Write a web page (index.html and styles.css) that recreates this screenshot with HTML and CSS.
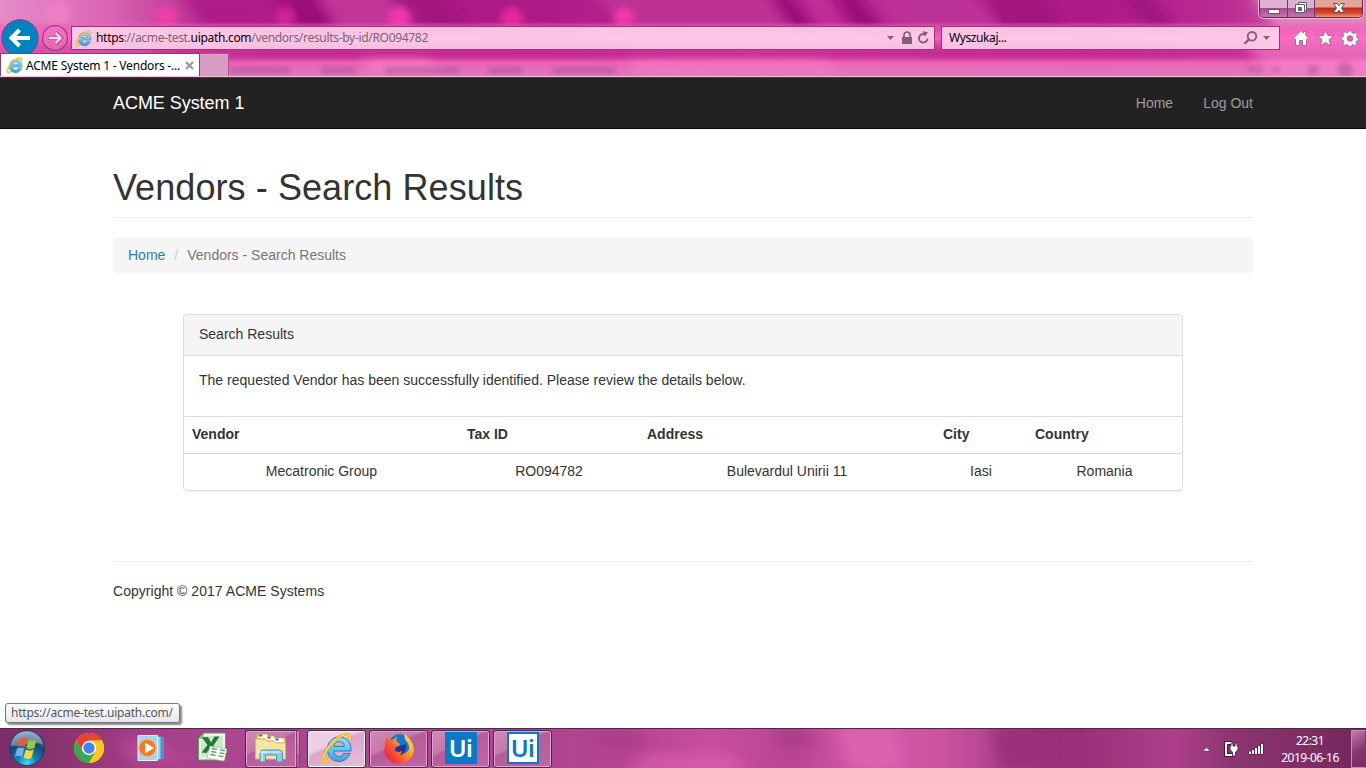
FILE: index.html
```html
<!DOCTYPE html>
<html lang="en">
<head>
<meta charset="utf-8">
<title>ACME System 1 - Vendors - Search Results</title>
<link rel="stylesheet" href="styles.css">
</head>
<body>
<svg class="defs" width="0" height="0" aria-hidden="true">
  <defs>
    <linearGradient id="ieBlue" x1="0" y1="0" x2="0" y2="1"><stop offset="0" stop-color="#8fe0fb"/><stop offset=".5" stop-color="#62c9f2"/><stop offset="1" stop-color="#3f9fdc"/></linearGradient>
    <symbol id="ie" viewBox="0 0 32 32">
      <path d="M29 21.500C27 26.500 23 29.500 18 29.500C11 29.500 6.500 24.500 6.500 17.300C6.500 10 11.500 5 18 5C25.500 5 30.500 10.500 30 19H12.800C13 22.300 15 24.500 18.200 24.500C20.200 24.500 21.800 23.500 22.600 21.500Z M12.800 14.400H23.400C23.200 11.300 21.200 9.700 18.200 9.700C15.200 9.700 13.200 11.400 12.800 14.400Z" fill="url(#ieBlue)" fill-rule="evenodd" stroke="#2273b5" stroke-width=".9"/>
      <path d="M9 27C5 31 1.800 30.500 2.500 26C3.800 18.500 11.500 9 20 4C26 1 30.500 1.800 28.700 8" fill="none" stroke="#d89c10" stroke-width="2.800"/>
      <path d="M9 27C5 31 1.800 30.500 2.500 26C3.800 18.500 11.500 9 20 4C26 1 30.500 1.800 28.700 8" fill="none" stroke="#ffd83a" stroke-width="1.900"/>
    </symbol>
  </defs>
</svg>

<header class="browser">
  <svg class="glass" viewBox="0 0 1366 78" preserveAspectRatio="none" aria-hidden="true">
    <defs>
      <filter id="b5" x="-20%" y="-50%" width="140%" height="200%"><feGaussianBlur stdDeviation="6"/></filter>
      <filter id="b3" x="-50%" y="-50%" width="200%" height="200%"><feGaussianBlur stdDeviation="3.500"/></filter>
      <filter id="b2" x="-10%" y="-50%" width="120%" height="200%"><feGaussianBlur stdDeviation="2.500"/></filter>
      <linearGradient id="gTop" x1="0" x2="1" y1="0" y2="0"><stop offset="0" stop-color="#e58cc9"/><stop offset=".08" stop-color="#d965b3"/><stop offset=".13" stop-color="#c23e9b"/><stop offset=".2" stop-color="#ac1b86"/><stop offset=".4" stop-color="#ad1a85"/><stop offset=".55" stop-color="#c23399"/><stop offset=".8" stop-color="#ad1986"/><stop offset=".9" stop-color="#bb2d93"/><stop offset="1" stop-color="#e07ab9"/></linearGradient>
      <linearGradient id="gBar" x1="0" x2="0" y1="22" y2="78" gradientUnits="userSpaceOnUse"><stop offset="0" stop-color="#ff62c0" stop-opacity="0"/><stop offset=".07" stop-color="#f957b8" stop-opacity=".55"/><stop offset=".3" stop-color="#ff5fc0" stop-opacity=".9"/><stop offset=".5" stop-color="#d4389f" stop-opacity=".75"/><stop offset=".58" stop-color="#c62d90" stop-opacity=".75"/><stop offset=".66" stop-color="#d440a0" stop-opacity=".85"/><stop offset=".73" stop-color="#ee63b6" stop-opacity=".95"/><stop offset="1" stop-color="#df82c0" stop-opacity=".96"/></linearGradient>
    </defs>
    <rect width="1366" height="78" fill="url(#gTop)"/>
    <g filter="url(#b5)">
      <path d="M180-10H250L280 34H205Z" fill="#ae1a8b"/>
      <path d="M280-10H310L345 36H300Z" fill="#9b1078"/>
      <path d="M315-10H385L420 34H340Z" fill="#c13499"/>
      <path d="M400-10H440L475 34H425Z" fill="#a2137e"/>
      <path d="M590-10H770L810 34H635Z" fill="#be3096"/>
      <path d="M765-10H790L820 34H793Z" fill="#9c1078"/>
      <path d="M830-10H855L890 34H855Z" fill="#9c1078"/>
      <path d="M872-10H970L1005 34H905Z" fill="#bd3096"/>
      <path d="M985-10H1040L1070 34H1000Z" fill="#a3127e"/>
      <path d="M1120-10H1145L1180 34H1150Z" fill="#a0147e"/>
      <path d="M1250-10H1380V36H1280Z" fill="#df83bd"/>
    </g>
    <g filter="url(#b3)">
      <circle cx="58" cy="14" r="13" fill="#f47fc5" opacity=".8"/><circle cx="166" cy="17" r="11" fill="#ee3fa8" opacity=".9"/><circle cx="285" cy="17" r="10" fill="#d6269b" opacity=".8"/><circle cx="399" cy="18" r="11" fill="#ee38aa"/><circle cx="512" cy="18" r="11" fill="#e5289b"/><circle cx="624" cy="17" r="10" fill="#f139aa"/>
    </g>
    <rect y="22" width="1366" height="56" fill="url(#gBar)"/>
    <g filter="url(#b5)" fill="#ff8ed0" opacity=".5"><path d="M-10 55H150L170 74H-10ZM360 60H425L445 74H375ZM625 62H820L845 72H640ZM1240 38H1376V76H1270Z"/></g>
    <g filter="url(#b2)" fill="#8e4482" opacity=".4"><path d="M230 68h60v7h-60zM321 68h35v7h-35zM385 68h74v7h-74zM488 68h34v7h-34zM552 68h64v7h-64zM1247 68h15v5h-15zM1272 68h8v5h-8zM1308 66h10v10h-10z"/><circle cx="1345" cy="71" r="8"/></g>
  </svg>

  <div class="titlebar">
    <div class="winctl">
      <span class="wbtn min"><svg width="14" height="8" viewBox="0 0 14 8"><rect x="1.500" y="2.500" width="11" height="4" fill="#fff" stroke="#566070"/></svg></span>
      <span class="wbtn max"><svg width="14" height="14" viewBox="0 0 14 14"><path d="M4.500 1.500H12.500V9.500H10.500V11.500H1.500V3.500H4.500Z" fill="#fff" stroke="#566070"/><path d="M4 3.500H10.500V9" fill="none" stroke="#566070"/><path d="M4.500 6.500H7.500V9.500H4.500Z" fill="#a35289" stroke="#566070"/></svg></span>
      <span class="wbtn close"><svg width="14" height="12" viewBox="0 0 14 12"><path d="M1.500 1.500H5L7 3.700L9 1.500H12.500L9.500 6L12.500 10.500H9L7 8.300L5 10.500H1.500L4.500 6Z" fill="#fff" stroke="#59505f"/></svg></span>
    </div>
  </div>

  <div class="addressrow">
    <div class="navbtns">
      <svg width="70" height="38" viewBox="0 0 70 38"><circle cx="20" cy="19" r="18.300" fill="#0083c3" stroke="#8c3b80" stroke-width="1"/><path d="M30 19H12M19.500 11L11.500 19L19.500 27" fill="none" stroke="#fff" stroke-width="4"/><circle cx="55" cy="19" r="12.400" fill="#ee78bd" fill-opacity=".55" stroke="#97407f" stroke-width="1.200"/><path d="M48 19H60M55.500 13.500L61 19L55.500 24.500" fill="none" stroke="#9b4a86" stroke-width="4"/><path d="M48.500 19H60M55.500 13.800L60.700 19L55.500 24.200" fill="none" stroke="#f6d5ea" stroke-width="2.400"/></svg>
    </div>
    <div class="field url">
      <svg class="ico" width="17" height="17"><use href="#ie"/></svg>
      <span class="urltext"><b>https</b>://acme-test.<b>uipath.com</b>/vendors/results-by-id/RO094782</span>
      <svg width="44" height="16" viewBox="0 0 44 16" fill="#806078"><path d="M1 6H8L4.500 10Z"/><path d="M16 7H26V14H16Z"/><path d="M18 8V5A3 3 0 0 1 24 5V8" fill="none" stroke="#806078" stroke-width="1.700"/><path d="M41.500 8.500A4.300 4.300 0 1 1 38.500 4.200" fill="none" stroke="#806078" stroke-width="1.900"/><path d="M37 1L42 2.500L38.500 7Z"/></svg>
    </div>
    <div class="field search"><span>Wyszukaj...</span>
      <svg width="28" height="16" viewBox="0 0 28 16"><circle cx="9" cy="6.300" r="4.300" fill="none" stroke="#806078" stroke-width="1.900"/><path d="M5.800 9.500L1.500 13.800" stroke="#806078" stroke-width="2.300"/><path d="M20 6H27L23.500 10Z" fill="#806078"/></svg>
    </div>
    <div class="tools">
      <svg width="66" height="18" viewBox="0 0 66 18" fill="#fff" stroke="#a0528b" stroke-width=".8"><path d="M.5 9L8 1.500L10.500 4V2.500H12.800V6.300L15.500 9L14 10.600L13.500 10.200V16.500H9.500V11.500H6.500V16.500H2.500V10.200L2 10.600Z"/><path d="M32.500 .8L34.700 6.400L40.700 6.800L36 10.600L37.800 16.800L32.500 13.500L27.200 16.800L29 10.600L24.300 6.800L30.300 6.400Z"/><path d="M55.300 1.800H58.700L59.100 3.800L60.600 4.500L62.300 3.400L64.600 5.700L63.500 7.400L64 8.800L65.700 9.200V11.500L63.700 12L63 13.300L64 15L61.800 16.800L60.100 15.500L58.700 16.100V17.500H55.300L55 16.100L53.500 15.500L51.800 16.600L49.600 14.400L50.700 12.700L50.100 11.200L48.200 10.800V8L50.200 7.600L50.800 6.200L49.700 4.600L52 2.600L53.600 3.800L55 3.300Z"/><circle cx="57" cy="9.500" r="2.800" fill="#df64ae"/></svg>
    </div>
  </div>

  <div class="tabs">
    <div class="tab"><svg class="ico" width="17" height="17"><use href="#ie"/></svg><span class="tabtext">ACME System 1 - Vendors -...</span><svg width="9" height="9" viewBox="0 0 9 9"><path d="M1 1L8 8M8 1L1 8" stroke="#9a9a9a" stroke-width="2.200"/></svg></div>
    <div class="newtab"></div>
  </div>
</header>

<main class="page">
  <nav class="navbar">
    <div class="container navinner"><a class="brand">ACME System 1</a><div class="navlinks"><a>Home</a><a>Log Out</a></div></div>
  </nav>
  <div class="container">
    <h1 class="pagetitle">Vendors - Search Results</h1>
    <div class="breadcrumb"><a class="crumblink">Home</a><span class="slash">/</span><span>Vendors - Search Results</span></div>
    <section class="panel">
      <div class="panelhead">Search Results</div>
      <div class="panelbody">The requested Vendor has been successfully identified. Please review the details below.</div>
      <table class="results">
        <colgroup><col class="c1"><col class="c2"><col class="c3"><col class="c4"><col class="c5"></colgroup>
        <tr><th>Vendor</th><th>Tax ID</th><th>Address</th><th>City</th><th>Country</th></tr>
        <tr><td>Mecatronic Group</td><td>RO094782</td><td>Bulevardul Unirii 11</td><td>Iasi</td><td>Romania</td></tr>
      </table>
    </section>
    <footer class="footer">Copyright © 2017 ACME Systems</footer>
  </div>
  <div class="status">https://acme-test.uipath.com/</div>
</main>

<div class="taskbar">
  <svg class="glass" viewBox="0 0 1366 40" preserveAspectRatio="none" aria-hidden="true">
    <defs>
      <linearGradient id="gTask" x1="0" x2="1" y1="0" y2="0"><stop offset="0" stop-color="#7c2d69"/><stop offset=".04" stop-color="#89336f"/><stop offset=".1" stop-color="#a33c85"/><stop offset=".17" stop-color="#ac458f"/><stop offset=".4" stop-color="#ae4690"/><stop offset=".46" stop-color="#b64491"/><stop offset=".52" stop-color="#c84e9f"/><stop offset=".58" stop-color="#b94594"/><stop offset=".64" stop-color="#d85bab"/><stop offset=".69" stop-color="#cb529f"/><stop offset=".73" stop-color="#b24490"/><stop offset=".79" stop-color="#993078"/><stop offset=".86" stop-color="#ad3f8a"/><stop offset=".9" stop-color="#8d3571"/><stop offset="1" stop-color="#74265b"/></linearGradient>
      <filter id="b6" x="-20%" y="-50%" width="140%" height="200%"><feGaussianBlur stdDeviation="7"/></filter>
    </defs>
    <rect width="1366" height="40" fill="url(#gTask)"/>
    <g filter="url(#b6)" opacity=".85"><path d="M620 44L650 28H730L750 44Z" fill="#dd60af"/><path d="M590 4H640L650 18H600Z" fill="#a73b88"/><path d="M770 0H805L820 18H780Z" fill="#a73b86"/><path d="M835-5H890L905 40H850Z" fill="#de64b0"/><path d="M990-5H1070V45H1000Z" fill="#982d77"/><path d="M120 12H160L190 34H130Z" fill="#b94c98"/></g>
  </svg>
  <div class="start"><svg width="38" height="38" viewBox="0 0 38 38"><defs><radialGradient id="orb" cx=".5" cy=".95" r=".95"><stop offset="0" stop-color="#35e5ff"/><stop offset=".3" stop-color="#1680b7"/><stop offset=".65" stop-color="#154573"/><stop offset="1" stop-color="#7c9ab5"/></radialGradient></defs><circle cx="19" cy="19" r="17.500" fill="url(#orb)" stroke="#203958"/><path d="M3 16C6-2 31-2 35 16C25 10 12 20 3 16" fill="#fff" opacity=".3"/><path d="M12 10C15 7.500 17.500 8.500 19 9.500L16.800 18C14 16.500 12 17 9.500 18Z" fill="#f25a2c"/><path d="M20.500 10.500C23 12 26 12 28.500 10.500L26.300 19C24 20.500 21 20.500 18.300 19Z" fill="#97c83d"/><path d="M9 19.500C12 18 14 18.200 16.300 19.500L14 28C12 26.300 9.500 26.500 6.800 28Z" fill="#6cb5ed"/><path d="M17.800 20.500C20.500 22 23.300 22 25.800 20.500L23.500 29C21 30.500 18.500 30.200 15.500 28.500Z" fill="#ffd33c"/></svg></div>
  <div class="app"><svg width="30" height="30" viewBox="0 0 30 30"><circle cx="15" cy="15" r="15" fill="#fbc116"/><path d="M15 7.500H28A15 15 0 0 0 2 7.500L8.500 18.700Z" fill="#e94335"/><path d="M2 7.500A15 15 0 0 0 15 30L21.500 18.700L15 22L8.500 18.700Z" fill="#35a853"/><path d="M15 7.500H28A15 15 0 0 1 15 30L21.500 18.700Z" fill="#fdc71b"/><circle cx="15" cy="15" r="7.200" fill="#fff"/><circle cx="15" cy="15" r="5.700" fill="#4284f3"/></svg></div>
  <div class="app"><svg width="28" height="26" viewBox="0 0 28 26"><path d="M8 2H27V24H8Z" fill="#4d94c3"/><path d="M5 1.500H24V24.500H5Z" fill="#9ed0ef" stroke="#4a8fbd"/><path d="M1 .5H20.500V25.500H1Z" fill="#a7d4f1" stroke="#e2f4ff"/><circle cx="10.500" cy="13" r="8.600" fill="#f47b20" stroke="#f9b37c"/><path d="M8 7.500L17 13L8 18.500Z" fill="#fff"/></svg></div>
  <div class="app excel"><svg width="30" height="30" viewBox="0 0 30 30"><path d="M7 1H28.500V28H1.500V7Z" fill="#eef5eb" stroke="#4fa357"/><path d="M4 9L7 4H26V25H4Z" fill="#cfe6c8"/><path d="M7 1V7H1Z" fill="#8ec887"/><path d="M5 5.500L11 5L14 10.500L17.500 4.500H22.500L16.500 13.500L22.500 22L16.500 21.500L13 16.500L9.500 21L4.500 20.500L10.500 13Z" fill="#1c7b36"/><path d="M13 14L30 17L27 29L10 26Z" fill="#fff" stroke="#8dbd8d" stroke-width=".6"/><path d="M15 16.500L20 17.300M23 17.800L28 18.600M14.500 19.500L19.500 20.300M22.500 20.800L27.500 21.600M13.500 22.500L18.500 23.300M21.500 23.800L26.500 24.600" stroke="#4f9b56" stroke-width="1.300"/></svg></div>
  <div class="taskbtn stack"><svg width="34" height="30" viewBox="0 0 34 30"><path d="M2.500 3Q2.500 1 4.500 1H13L15 3H20L22 5H31.500V25H2.500Z" fill="#ecd88a" stroke="#b89b48"/><path d="M5 1.500H13V5H5Z" fill="#fff"/><path d="M5 1.500H8.500V3.500H5Z" fill="#16a52b"/><path d="M12 3.500H20V7H12Z" fill="#fff"/><path d="M13.500 3.500H16.500V5.500H13.500Z" fill="#d73324"/><path d="M20 5.500H29V9H20Z" fill="#fff"/><path d="M21.500 5.500H24.500V7.500H21.500Z" fill="#2175c9"/><path d="M1.500 6H11L13 8H20L22 10H31.500V26H1.500Z" fill="#f5e5a1" stroke="#d4b967"/><path d="M6 20Q6 17 9 17H25Q28.500 17 28.500 20V29H22.500V22H11.500V29H6Z" fill="#8bcbe6" stroke="#4f94bb"/><path d="M8 19H27M8 20V28M3 19H13" stroke="#e9faff"/></svg></div>
  <div class="taskbtn active"><svg width="32" height="32"><use href="#ie"/></svg></div>
  <div class="taskbtn"><svg width="32" height="32" viewBox="0 0 32 32"><defs><linearGradient id="fox" x1="1" y1="0" x2="0" y2=".8"><stop offset="0" stop-color="#fff35a"/><stop offset=".35" stop-color="#ffb01d"/><stop offset=".7" stop-color="#fb5230"/><stop offset="1" stop-color="#e4204f"/></linearGradient></defs><circle cx="16" cy="17" r="14.500" fill="url(#fox)"/><circle cx="16.500" cy="12.500" r="10.500" fill="#0b78dd"/><path d="M13 15L23 12Q24 20 17 23Q12 22 13 15Z" fill="#2d2c87"/><path d="M2 14Q2 8 4 5L6.500 9Q9 7 11 7Q12 5 14 4.500Q12.500 7 14 10L17 12Q17 14 12.500 15L11 18.500Q14 21 19 19Q18 24 13 24Q22 27 25.500 20Q27 14 24 10Q20 6 22 1Q24 5 27 8Q31 13 30.500 19Q28 31 16 31.500Q4 31 1.500 20Z" fill="url(#fox)"/></svg></div>
  <div class="taskbtn"><span class="ui">Ui</span></div>
  <div class="taskbtn"><span class="ui inverse">Ui</span></div>
  <div class="tray">
    <svg width="62" height="18" viewBox="0 0 62 18"><path d="M1 11L4.500 7.500L8 11Z" fill="#fff" stroke="#4c1c42" stroke-width=".4"/><path d="M30 3H24V15H31" fill="none" stroke="#3f183a" stroke-width="4"/><path d="M30 3H24V15H31" fill="none" stroke="#fff" stroke-width="2"/><path d="M28 6H29V3H31V6H33V3H35V6H36V10L33.500 12V16H30.500V12L28 10Z" fill="#fff" stroke="#3f183a" stroke-width=".8"/><path d="M47 11.500h2v2.500h-2zM50 10h2v4h-2zM53 8h2v6h-2zM56 6h2v8h-2zM59 4h2v10h-2z" fill="#fff" stroke="#3f183a" stroke-width="1" paint-order="stroke"/></svg>
  </div>
  <div class="clock"><span>22:31</span><span>2019-06-16</span></div>
  <div class="desktop"></div>
</div>
</body>
</html>
```
FILE: styles.css
```css
* { box-sizing: border-box; }
body { margin: 0; width: 1366px; height: 768px; overflow: hidden; display: flex; flex-direction: column; background: #fff; color: #333; font: 14px/20px "Liberation Sans", Arial, sans-serif; }
svg { display: block; flex: none; }
.defs { position: absolute; }

/* browser frame */
.browser { position: relative; height: 78px; flex: none; border-bottom: 1px solid #5b2b50; font: 12px/16px "Noto Sans", "Open Sans", sans-serif; color: #000; overflow: hidden; display: flex; flex-direction: column; }
.glass { position: absolute; left: 0; top: 0; width: 100%; height: 100%; z-index: -1; }
.browser, .taskbar { z-index: 0; }
.titlebar { height: 26px; flex: none; display: flex; justify-content: flex-end; padding-right: 3px; }
.winctl { display: flex; height: 18px; border: 1px solid #65264f; border-top: 0; border-radius: 0 0 5px 5px; box-shadow: 0 0 0 1px #f3b6dc; overflow: hidden; }
.wbtn { height: 17px; display: flex; align-items: center; justify-content: center; background: linear-gradient(#e0b0d2 0 45%, #a34b8a 48%, #c775af); border-right: 1px solid #773763; }
.wbtn svg { margin-top: -1px; }
.min { width: 28px; }
.min svg { margin-top: 4px; }
.max { width: 27px; }
.close { width: 47px; border: 0; background: linear-gradient(#e1a59b 0 40%, #bf2913 48%, #d74f31 80%, #ee9a7d); }
.addressrow { height: 25px; flex: none; display: flex; align-items: flex-start; }
.navbtns { width: 71px; height: 38px; flex: none; margin-top: -7px; }
.field { height: 24px; border: 1px solid #913a78; display: flex; align-items: center; background: rgba(255, 225, 241, .8); }
.url { width: 864px; padding: 0 4px 0 3px; gap: 4px; margin-right: 6px; }
.urltext { flex: 1; color: #76656f; letter-spacing: -.31px; white-space: nowrap; }
.urltext b { color: #000; font-weight: 400; }
.search { width: 339px; margin-right: 13px; padding: 0 8px 0 7px; justify-content: space-between; letter-spacing: -.4px; }
.tools { width: 66px; margin-top: 3px; }
.tabs { position: relative; height: 26px; padding-top: 2px; display: flex; border-bottom: 1px solid #f5c0df; }
.tab { width: 200px; height: 23px; background: #fff; border: 1px solid #913a78; border-bottom: 0; display: flex; align-items: center; padding: 1px 5px 0 5px; gap: 3px; }
.tabtext { flex: 1; white-space: nowrap; letter-spacing: -.2px; }
.newtab { width: 29px; height: 23px; background: #d79bc4; border: 1px solid #a95494; border-left: 0; border-bottom: 0; }

/* web page */
.page { position: relative; height: 650px; flex: none; background: #fff; }
.container { width: 1140px; margin: 0 auto; }
.navbar { height: 51px; background: #222; border-bottom: 1px solid #080808; }
.navinner { display: flex; justify-content: space-between; align-items: center; height: 50px; }
.brand { color: #fff; font-size: 18px; letter-spacing: -.05px; }
.navlinks { display: flex; gap: 30px; color: #9d9d9d; }
.pagetitle { margin: 39px 0 20px; height: 50px; border-bottom: 1px solid #eee; font-size: 36px; line-height: 39px; font-weight: 400; letter-spacing: .08px; }
.breadcrumb { height: 35px; background: #f5f5f5; border-radius: 4px; padding: 7px 15px; display: flex; color: #777; }
.crumblink { color: #337ab7; }
.slash { color: #ccc; padding: 0 9px; }
.panel { width: 1000px; height: 177px; margin: 41px auto 0; border: 1px solid #ddd; border-radius: 4px; box-shadow: 0 1px 1px rgba(0, 0, 0, .05); overflow: hidden; }
.panelhead { height: 41px; background: #f5f5f5; border-bottom: 1px solid #ddd; padding: 9px 15px; }
.panelbody { height: 60px; padding: 14px 15px; letter-spacing: .012px; }
.results { width: 998px; table-layout: fixed; border-collapse: separate; border-spacing: 0; }
.c1 { width: 275px; } .c2 { width: 180px; } .c3 { width: 296px; } .c4 { width: 92px; } .c5 { width: 155px; }
.results th, .results td { height: 37px; padding: 7px 8px 9px; border-top: 1px solid #ddd; text-align: center; }
.results th { text-align: left; }
.footer { margin-top: 70px; border-top: 1px solid #eee; padding-top: 19px; letter-spacing: .03px; }
.status { position: absolute; left: 5px; top: 625px; width: 175px; height: 20px; border: 1px solid #767676; border-radius: 3px; padding: 1px 5px; background: linear-gradient(#fff, #e5e5f0); box-shadow: 2px 2px 2px #888; font: 12px/16px "Noto Sans", sans-serif; letter-spacing: -.23px; color: #575757; white-space: nowrap; }

/* taskbar */
.taskbar { position: relative; height: 40px; flex: none; display: flex; align-items: stretch; border-top: 1px solid #52244a; box-shadow: inset 0 1px #d98fc1; overflow: hidden; }
.start { width: 58px; padding: 0 0 0 8px; }
.app { width: 62px; display: flex; align-items: center; justify-content: center; padding-bottom: 1px; }
.excel { padding-right: 2px; padding-bottom: 3px; }
.taskbtn { width: 59px; height: 38px; margin: 1px 3px 0 0; display: flex; align-items: center; justify-content: center; padding-bottom: 2px; border: 1px solid #51264b; border-radius: 3px; box-shadow: inset 0 0 0 1px #dda5cf; background: linear-gradient(155deg, #cf8ab7 0, #c57aaa 38%, #b55c98 43%, #c266a6); }
.stack { width: 55px; margin-left: 1px; margin-right: 7px; border-right: 4px double #7f416f; }
.active { background: linear-gradient(155deg, #eed0e4 0 36%, #dda6cc 43%, #e9bfdc); box-shadow: inset 0 0 0 1px #fff; }
.ui { width: 32px; height: 32px; background: #0878c8; color: #fff; font: 600 24px/32px "Noto Sans", sans-serif; text-align: center; letter-spacing: -.5px; }
.inverse { border: 2px solid #0878c8; line-height: 28px; background: #fff; color: #0878c8; }
.tray { margin-left: auto; width: 78px; display: flex; align-items: center; }
.clock { width: 62px; padding-top: 3px; margin: 0 1px 0 -1px; display: flex; flex-direction: column; align-items: center; font: 12px/17px "Noto Sans", sans-serif; letter-spacing: -.5px; color: #fff; white-space: nowrap; }
.desktop { width: 15px; margin: 1px 0 0 9px; border: 1px solid #c98ab5; border-right-color: #753867; background: linear-gradient(150deg, #c17ca9, #85366d 55%, #7c2c63); }
```
